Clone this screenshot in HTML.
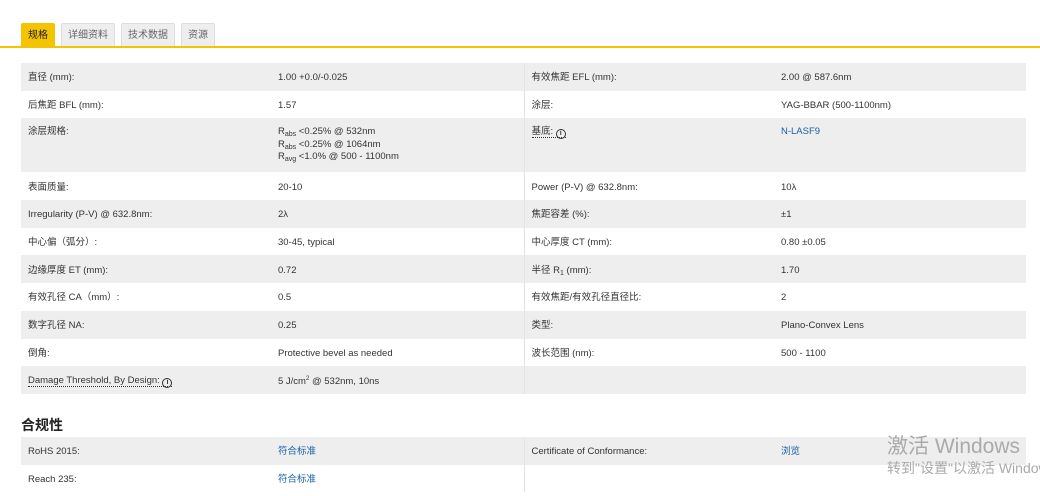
<!DOCTYPE html>
<html><head><meta charset="utf-8"><style>
*{margin:0;padding:0;box-sizing:border-box}
body{width:1040px;height:496px;overflow:hidden;background:#fff;font-family:"Liberation Sans","Noto Sans CJK SC",sans-serif;font-size:9.5px;color:#333;position:relative}
.tab{position:absolute;top:23px;height:23px;line-height:23px;padding:0 6px;font-size:10px;color:#666;background:#eee;border:1px solid #ddd;border-bottom:none;border-radius:2px 2px 0 0}
.tab.a{background:#f5c400;color:#222;border-color:#f5c400}
.line{position:absolute;top:46px;left:0;width:1040px;height:2px;background:#f5c400}
table{position:absolute;left:21px;width:1005px;border-collapse:collapse}
td{height:27.7px;vertical-align:middle;padding:3px 7px 0;line-height:12px}
tr:nth-child(odd) td{background:#eee}
td.c1{width:250px}td.c2{width:253px;border-right:1px solid #e4e4e4}td.c3{width:250px}
.tall td{height:54px;vertical-align:top;padding-top:8px}
.tall td.c2{line-height:12.5px}
a{color:#1a5fa8;text-decoration:none}
sub{font-size:7px;vertical-align:-2px;line-height:0}
.u{border-bottom:1px dotted #333}
.i{display:inline-block;width:10px;height:10px;border:1.5px solid #333;border-radius:50%;font-size:7px;line-height:7px;text-align:center;font-weight:bold;vertical-align:-1px}
h3{position:absolute;left:21px;top:415px;font-size:14px;font-weight:bold;color:#222}
.wm{position:absolute;left:887px;color:#aaa;white-space:nowrap}
</style></head><body>
<div class="tab a" style="left:21px">规格</div>
<div class="tab" style="left:61px">详细资料</div>
<div class="tab" style="left:121px">技术数据</div>
<div class="tab" style="left:181px">资源</div>
<div class="line"></div>
<table style="top:63px">
<tr><td class="c1">直径 (mm):</td><td class="c2">1.00 +0.0/-0.025</td><td class="c3">有效焦距 EFL (mm):</td><td>2.00 @ 587.6nm</td></tr>
<tr><td class="c1">后焦距 BFL (mm):</td><td class="c2">1.57</td><td class="c3">涂层:</td><td>YAG-BBAR (500-1100nm)</td></tr>
<tr class="tall"><td class="c1">涂层规格:</td><td class="c2">R<sub>abs</sub> &lt;0.25% @ 532nm<br>R<sub>abs</sub> &lt;0.25% @ 1064nm<br>R<sub>avg</sub> &lt;1.0% @ 500 - 1100nm</td><td class="c3"><span class="u">基底: <span class="i">i</span></span></td><td><a>N-LASF9</a></td></tr>
<tr><td class="c1">表面质量:</td><td class="c2">20-10</td><td class="c3">Power (P-V) @ 632.8nm:</td><td>10λ</td></tr>
<tr><td class="c1">Irregularity (P-V) @ 632.8nm:</td><td class="c2">2λ</td><td class="c3">焦距容差 (%):</td><td>±1</td></tr>
<tr><td class="c1">中心偏（弧分）:</td><td class="c2">30-45, typical</td><td class="c3">中心厚度 CT (mm):</td><td>0.80 ±0.05</td></tr>
<tr><td class="c1">边缘厚度 ET (mm):</td><td class="c2">0.72</td><td class="c3">半径 R<sub>1</sub> (mm):</td><td>1.70</td></tr>
<tr><td class="c1">有效孔径 CA（mm）:</td><td class="c2">0.5</td><td class="c3">有效焦距/有效孔径直径比:</td><td>2</td></tr>
<tr><td class="c1">数字孔径 NA:</td><td class="c2">0.25</td><td class="c3">类型:</td><td>Plano-Convex Lens</td></tr>
<tr><td class="c1">倒角:</td><td class="c2">Protective bevel as needed</td><td class="c3">波长范围 (nm):</td><td>500 - 1100</td></tr>
<tr><td class="c1"><span class="u">Damage Threshold, By Design: <span class="i">i</span></span></td><td class="c2">5 J/cm<sup style="font-size:6px;line-height:0">2</sup> @ 532nm, 10ns</td><td class="c3"></td><td></td></tr>
</table>
<h3>合规性</h3>
<table style="top:437px">
<tr><td class="c1">RoHS 2015:</td><td class="c2"><a>符合标准</a></td><td class="c3">Certificate of Conformance:</td><td><a>浏览</a></td></tr>
<tr><td class="c1">Reach 235:</td><td class="c2"><a>符合标准</a></td><td class="c3"></td><td></td></tr>
</table>
<div class="wm" style="top:430px;font-size:21px">激活 Windows</div>
<div class="wm" style="top:458px;font-size:14px">转到"设置"以激活 Windows</div>
</body></html>
